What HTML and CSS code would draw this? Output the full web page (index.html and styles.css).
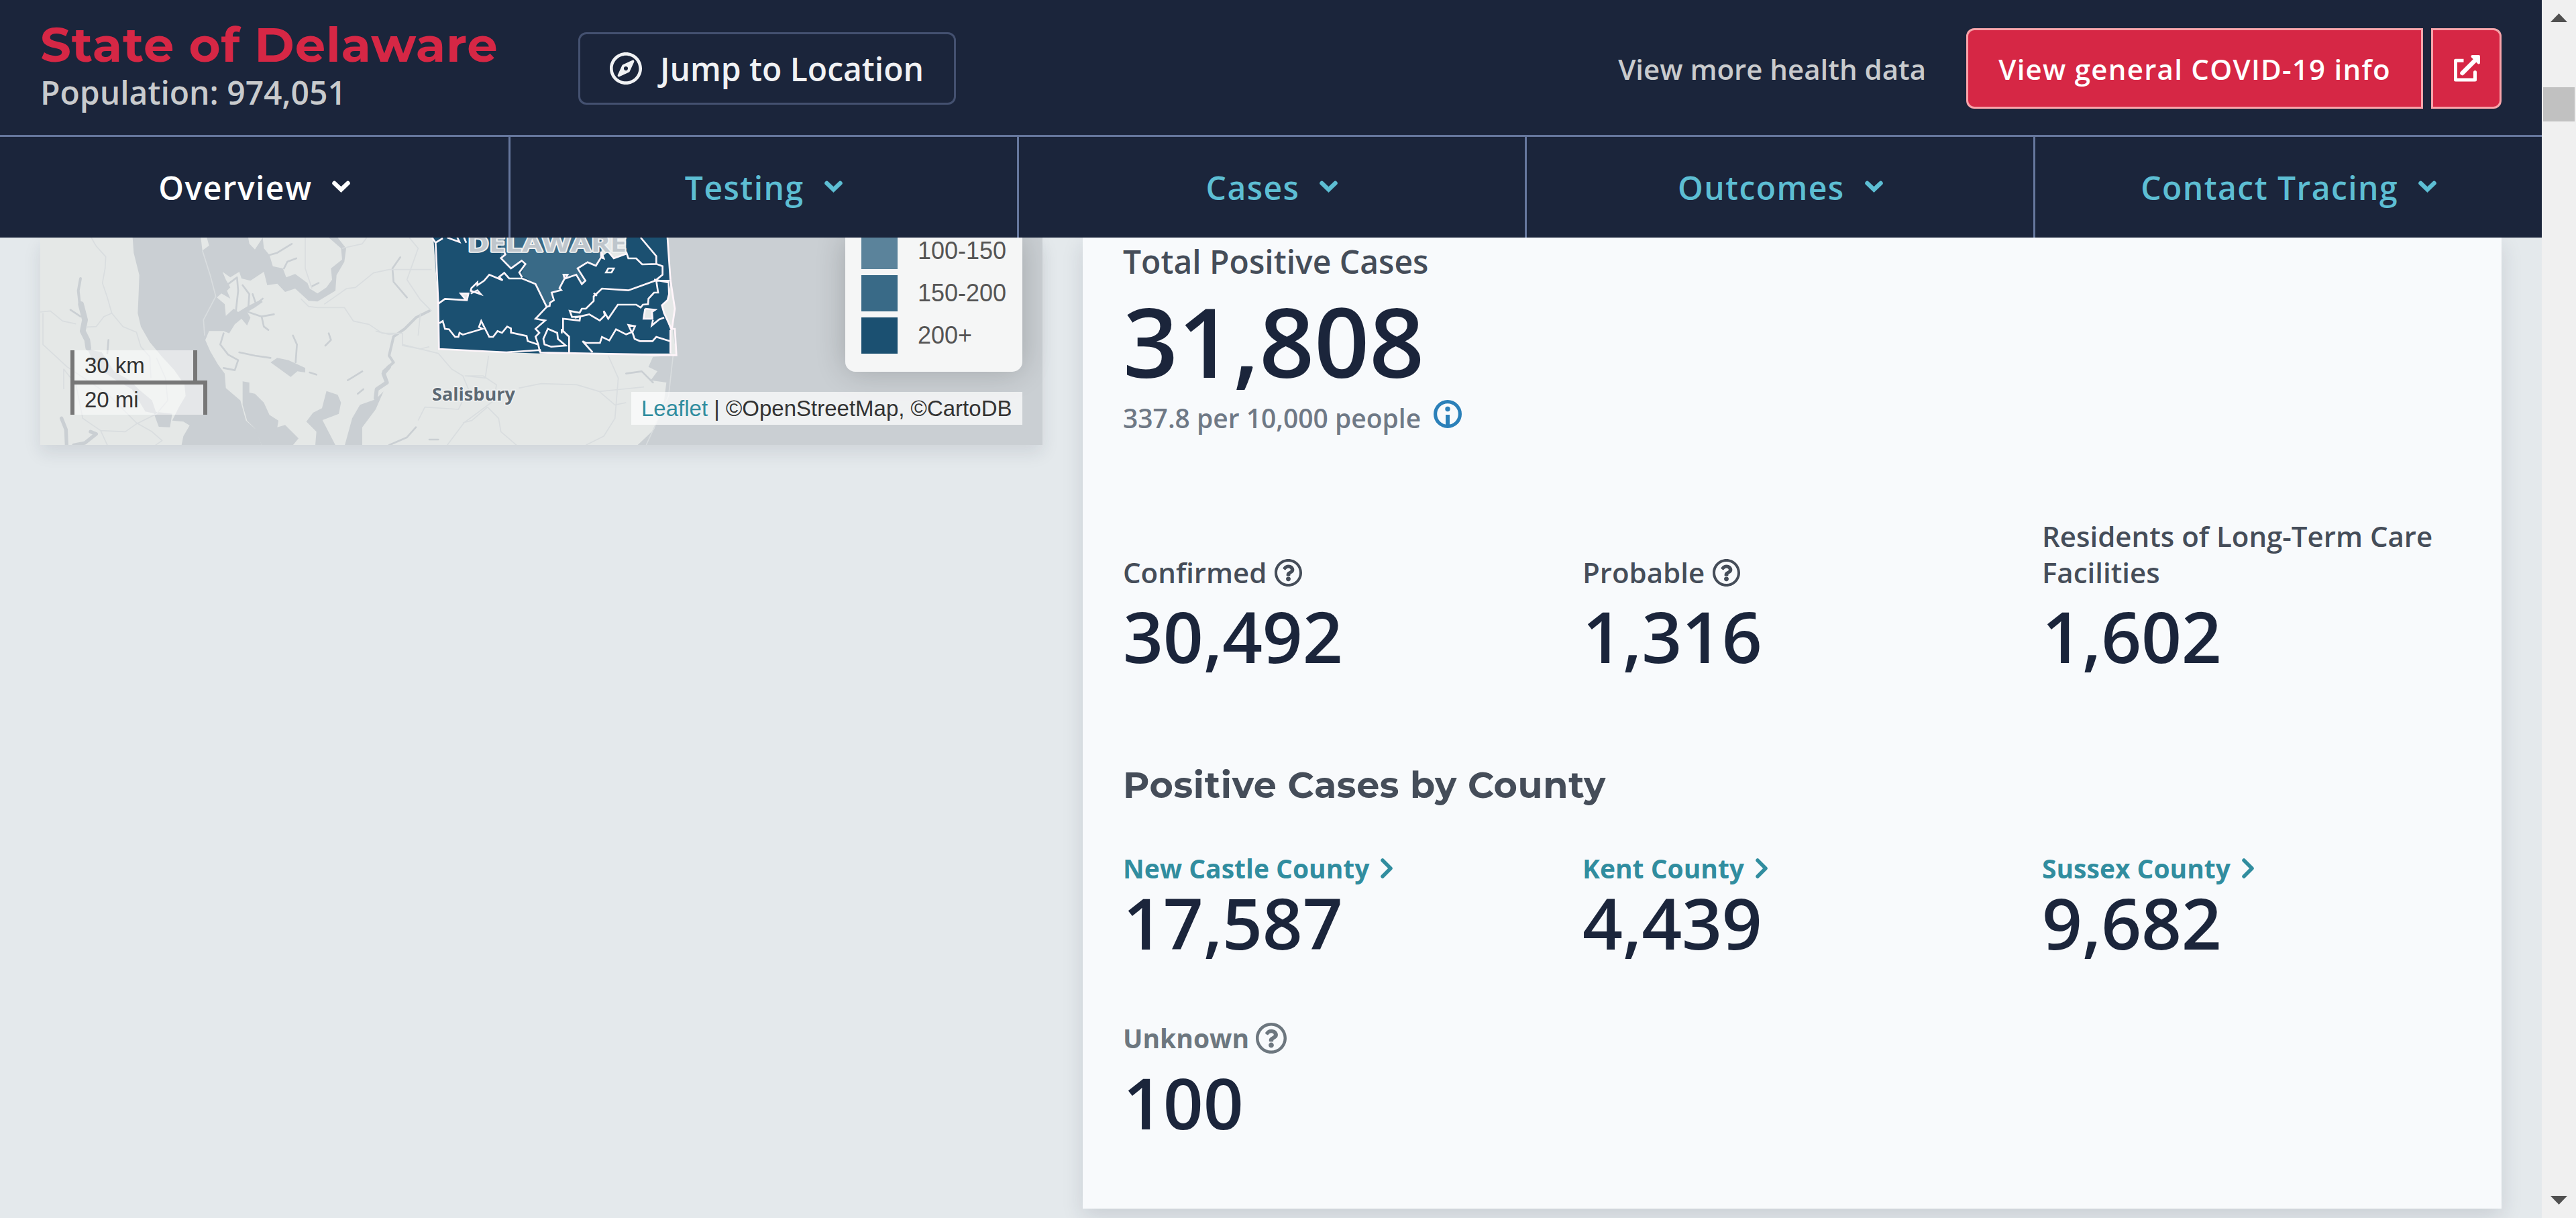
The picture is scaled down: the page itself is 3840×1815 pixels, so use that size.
FILE: index.html
```html
<!DOCTYPE html>
<html lang="en">
<head>
<meta charset="utf-8">
<title>State of Delaware – COVID-19 Data</title>
<link rel="stylesheet" href="styles.css">
</head>
<body>
<svg class="defs" aria-hidden="true">
  <symbol id="help" viewBox="8 8 496 496"><path d="M256 8C119.043 8 8 119.083 8 256c0 136.997 111.043 248 248 248s248-111.003 248-248C504 119.083 392.957 8 256 8zm0 448c-110.532 0-200-89.431-200-200 0-110.495 89.472-200 200-200 110.491 0 200 89.471 200 200 0 110.53-89.431 200-200 200zm107.244-255.2c0 67.052-72.421 68.084-72.421 92.863V300c0 6.627-5.373 12-12 12h-45.647c-6.627 0-12-5.373-12-12v-8.659c0-35.745 27.1-50.034 47.579-61.516 17.561-9.845 28.324-16.541 28.324-29.579 0-17.246-21.999-28.693-39.784-28.693-23.189 0-33.894 10.977-48.942 29.969-4.057 5.12-11.46 6.071-16.666 2.124l-27.824-21.098c-5.107-3.872-6.251-11.066-2.644-16.363C184.846 131.491 214.94 112 261.794 112c49.071 0 101.45 38.304 101.45 88.8zM298 368c0 23.159-18.841 42-42 42s-42-18.841-42-42 18.841-42 42-42 42 18.841 42 42z"/></symbol>
  <symbol id="down" viewBox="0 0 27 18"><path d="M3.500 4l10 9.500 10-9.500" fill="none" stroke="currentColor" stroke-width="6.500" stroke-linecap="round"/></symbol>
  <symbol id="right" viewBox="0 0 21 32"><path d="M4 4l12 12-12 12" fill="none" stroke="currentColor" stroke-width="5.500" stroke-linecap="round" stroke-linejoin="round"/></symbol>
</svg>
<div class="page">
  <header class="header">
    <div class="topbar">
      <div class="place">
        <h1 class="place-name">State of Delaware</h1>
        <p class="population">Population: 974,051</p>
      </div>
      <button class="jump">
        <svg class="compass" viewBox="0 8 496 496"><path fill="currentColor" d="M347.94 129.86L203.6 195.83a31.938 31.938 0 0 0-15.77 15.77l-65.97 144.34c-7.61 16.65 9.54 33.81 26.2 26.2l144.34-65.97a31.938 31.938 0 0 0 15.77-15.77l65.97-144.34c7.61-16.66-9.54-33.81-26.2-26.2zm-77.36 148.72c-12.47 12.47-32.69 12.47-45.16 0-12.47-12.47-12.47-32.69 0-45.16 12.47-12.47 32.69-12.47 45.16 0 12.47 12.47 12.47 32.69 0 45.16zM248 8C111.03 8 0 119.03 0 256s111.03 248 248 248 248-111.03 248-248S384.97 8 248 8zm0 448c-110.28 0-200-89.72-200-200S137.72 56 248 56s200 89.72 200 200-89.72 200-200 200z"/></svg>
        <span>Jump to Location</span>
      </button>
      <div class="actions">
        <a class="more">View more health data</a>
        <a class="info-btn">View general COVID-19 info</a>
        <a class="ext-btn"><svg class="ext" viewBox="0 0 40 40"><path d="M15.500 8.200H3.500V37H32.500V27.500" fill="none" stroke="currentColor" stroke-width="5" stroke-linejoin="round"/><path d="M30 25.500a2.500 2.500 0 0 1 5 0V30H30Z" fill="currentColor"/><path d="M13.500 27L32 8.500" fill="none" stroke="currentColor" stroke-width="6.500" stroke-linecap="round"/><path d="M28.500 2H38V11.500Z" fill="currentColor" stroke="currentColor" stroke-width="4" stroke-linejoin="round"/></svg></a>
      </div>
    </div>
    <nav class="tabs">
      <a class="tab active">Overview<svg class="down"><use href="#down"/></svg></a>
      <a class="tab">Testing<svg class="down"><use href="#down"/></svg></a>
      <a class="tab">Cases<svg class="down"><use href="#down"/></svg></a>
      <a class="tab">Outcomes<svg class="down"><use href="#down"/></svg></a>
      <a class="tab">Contact Tracing<svg class="down"><use href="#down"/></svg></a>
    </nav>
  </header>
  <main class="content">
    <section class="map">
      <svg class="tiles" viewBox="0 12 4482 927">
        <rect y="12" width="4482" height="927" fill="#e5e8e7"/>
        <g fill="#cacfd3">
          <!-- Chesapeake Bay and inlets -->
          <path d="M413 12L418 80 443 180 440 260 436 350 450 410 490 480 545 545 600 605 645 670 650 720 620 770 590 830 640 835 668 852 640 900 632 940H990L965 870 920 830 895 740 830 685 825 620 795 580 760 520 738 470 755 430 820 430 845 440 870 400 900 375 925 405 940 370 925 345 960 325 995 300 985 290 925 320 885 345 865 330 830 362 825 310 790 280 810 262 850 285 835 250 850 235 830 200 815 165 850 190 890 165 900 195 940 205 1000 165 1015 225 1060 218 1095 255 1140 240 1200 295 1240 298 1320 250 1325 180 1360 120 1368 60 1330 12H1290L1345 60 1350 110 1300 150 1305 200 1280 235 1240 262 1205 240 1195 215 1140 175 1100 190 1085 150 1040 140 1025 90 1000 60 995 12 960 65 935 40 930 12H745L755 48 725 70 718 12Z"/>
          <path d="M505 790L530 858 580 860 590 800Z"/>
          <path d="M210 510L275 525 330 610 400 650 440 690 500 740 520 800 470 790 410 690 340 650 250 590Z"/>
          <path d="M905 655L935 660 935 705 960 710 1000 750 1025 805 1065 830 1060 860 1095 850 1155 910 1130 940H990L960 865 925 830 905 760Z"/>
          <path d="M1030 570L1060 550 1110 560 1185 595 1185 615 1150 610 1120 635Z"/>
          <path d="M1280 698L1330 715 1345 750 1335 800 1262 828 1320 940H1230L1235 880 1190 835 1220 795 1260 775Z"/>
          <path d="M1500 735L1535 700 1500 780 1440 860 1440 940H1362L1395 820 1430 760Z"/>
          <path d="M2805 12H4482V939H2672L2745 870 2790 740 2800 660 2730 650 2760 610 2720 590 2740 545 2825 540Z"/>
        </g>
        <g fill="none" stroke="#cacfd3" stroke-linejoin="round" stroke-linecap="round">
          <path stroke-width="12" d="M180 195L170 250 178 320"/>
          <path stroke-width="26" d="M182 310L200 380 190 430 210 470 215 505"/>
          <path stroke-width="16" d="M95 820L115 870 118 940M150 940L200 930 250 890 225 880"/>
          <path stroke-width="8" d="M135 335L180 365M305 470L300 530M820 440L805 490 840 535 885 560 870 605 820 595M890 525L960 540 1030 550M1130 450L1148 490 1142 570M1290 440L1300 470 1275 495M840 220L880 190 885 250 875 340M905 225L935 265 930 330M950 265L965 310 995 285M930 345L990 365 1045 355M990 365L1000 410 1020 425M1025 90L1060 80 1125 40M1090 150L1105 120 1145 105M1215 230L1245 215M1375 650L1400 635 1440 610M1205 615L1235 625M1420 710L1445 690"/>
          <path stroke-width="18" d="M1560 590L1535 620 1550 660 1505 690 1500 730"/>
          <path stroke-width="12" d="M1580 455L1560 540 1580 570 1535 610 1550 660M1580 455L1630 420 1680 370 1740 340"/>
          <path stroke-width="8" d="M1610 100L1575 150 1580 210 1640 280M1680 860L1640 905 1560 940M1740 915L1780 915M2620 620L2690 610 2740 660"/>
        </g>
        <g fill="none" stroke="#d9dddf" stroke-width="5" stroke-linejoin="round">
          <path d="M228 12L250 50 293 98 290 150 278 215 300 280 320 350 370 410 430 435 450 500 490 545 495 640M0 345L45 340 100 385 160 398M12 350V490L120 590 300 710 430 840 500 880 545 920 515 940M205 412L250 410 285 365 320 350M160 670L190 820 270 875 380 880 430 845 520 800 570 740 560 640 520 550M270 875L300 940M105 690L105 600 160 670"/>
          <path d="M725 70L760 180 785 275 730 380 735 450M1185 12V150L1215 240M1165 285L1200 320 1240 325 1360 325 1400 385 1470 400 1530 440 1620 440 1620 495 1700 510 1740 500M1270 310L1370 240 1410 235 1490 170 1560 155H1750M1350 60L1440 40 1460 12"/>
          <path d="M1500 430L1560 445 1615 440M1620 490L1780 530 1840 600 1890 630 1915 690 1870 780 1720 770 1690 830M2005 540L1990 640 1900 630H1980L2040 670 2030 740 1895 840 1820 940M2000 770L2050 820 2060 880 2130 940M2140 685L2240 665 2400 670 2500 700 2570 760 2620 750M2540 540L2585 640 2570 820 2520 900 2440 940M2500 700L2600 690 2700 680M1890 840L1930 830 2000 770M1650 12L1690 60 1640 200 1700 290 1750 340M1700 350L1690 450M2830 540L2810 720 2710 939"/>
        </g>
        <g class="zips" transform="translate(1500 0)">
          <path fill="#e5e8e7" d="M252 12H1305L1322 200 1338 330 1328 420 1345 540 735 525 280 510 270 280Z"/>
          <path fill="#1b5071" d="M258 12H1305L1320 210 1305 290 1280 315 1295 360 1318 425V530H735L585 525 283 510 280 305Z"/>
          <path fill="#396a87" d="M560 12H1010V80L985 138 948 122 903 150 935 205 925 220 895 178 845 195 825 245 787 258 790 295 765 322 715 220 650 180 670 130 650 115 605 150 560 104Z"/>
          <path fill="#e5e8e7" d="M1010 12H1120V85L1065 105 1040 75 1010 100ZM380 258H415L405 292ZM1205 330H1240V375H1198Z"/>
        </g>
        <g class="borders" transform="translate(1500 0)">
          <path d="M268 35L280 305 283 510 585 525 735 515 737 526 1345 538 1338 420 1325 420 1338 330 1318 200 1305 12M268 35L252 12M268 35L300 15M320 12L375 32 365 12M395 12L405 35"/>
          <path d="M280 308L310 286 408 292 415 262H380L405 292M425 262L455 248 470 265 425 250 428 238 455 212 455 225 485 205 508 178 568 203 552 188 575 170 597 195H655L715 220 765 322 715 375 758 383 715 420 732 438 715 455 727 490 735 525M575 75L580 88 560 104 605 150 653 115 670 130 642 168 655 190"/>
          <path d="M285 395L300 385 310 420 328 422 355 456H370L375 438 390 446 478 420 462 412 472 385 508 456H525L545 430 565 438 588 410 605 418V437L675 452 680 475 725 490"/>
          <path d="M765 322L778 318 780 303 797 292 787 258 830 247 822 238 845 195 840 178H858L848 195 897 178 922 220 938 205 903 150 948 122 985 138 1008 100V75L1020 105 1005 100M1120 85L1065 105 1040 75M1120 75L1130 105H1165L1192 132 1255 130 1283 140V178L1250 205 1130 248 1012 240 975 275 975 295 940 330H922L912 348 868 340 878 367 915 365 912 383 838 375V430L865 455V525M1185 12L1255 95V130"/>
          <path d="M890 370L955 355 1002 383 1025 360 1020 340 1040 375 1083 312H1165L1185 325 1195 312 1218 310 1220 285 1245 258H1263L1255 205H1315M1245 200L1310 213 1312 265 1305 292 1280 315 1290 350 1325 425M1205 330L1198 375H1238L1235 345 1250 335 1205 330M1290 370L1268 378 1235 405 1240 380M970 525L925 475 940 483H1003L1012 456 1045 472 1075 422 1120 445 1145 435 1130 403 1160 408 1148 435 1158 465 1182 475H1238L1255 456 1315 475M1318 425V530M975 260L990 272M832 420V440"/>
          <path d="M770 420L812 438 815 465 850 495 785 500 755 490 750 465ZM1040 150H1065L1055 168H1030Z"/>
        </g>
        <g class="map-label">
          <text x="1910" y="74" font-size="104" textLength="712" lengthAdjust="spacingAndGlyphs" fill="#bfc6cc">DELAWARE</text>
          <text x="1752" y="742" font-size="82" textLength="372" lengthAdjust="spacingAndGlyphs" fill="#5d6974">Salisbury</text>
        </g>
      </svg>
      <div class="scale"><div class="scale-km">30 km</div><div class="scale-mi">20 mi</div></div>
      <div class="legend">
        <div class="key"><i class="swatch s1"></i>100-150</div>
        <div class="key"><i class="swatch s2"></i>150-200</div>
        <div class="key"><i class="swatch s3"></i>200+</div>
      </div>
      <div class="credit"><a>Leaflet</a> | ©OpenStreetMap, ©CartoDB</div>
    </section>
    <section class="card">
      <p class="total-label">Total Positive Cases</p>
      <p class="total">31,808</p>
      <p class="rate">337.8 per 10,000 people
        <svg class="info" viewBox="0 0 42 42"><circle cx="21" cy="21" r="18.400" fill="none" stroke="currentColor" stroke-width="5.200"/><circle cx="21" cy="13.500" r="3.700" fill="currentColor"/><path d="M18 22h6v16h-6z" fill="currentColor"/></svg>
      </p>
      <div class="stats kinds">
        <div><p class="label">Confirmed <svg class="help"><use href="#help"/></svg></p><p class="num">30,492</p></div>
        <div><p class="label">Probable <svg class="help"><use href="#help"/></svg></p><p class="num">1,316</p></div>
        <div><p class="label">Residents of Long-Term Care Facilities</p><p class="num">1,602</p></div>
      </div>
      <h2 class="heading">Positive Cases by County</h2>
      <div class="stats counties">
        <div><a class="county">New Castle County<svg class="right"><use href="#right"/></svg></a><p class="num">17,587</p></div>
        <div><a class="county">Kent County<svg class="right"><use href="#right"/></svg></a><p class="num">4,439</p></div>
        <div><a class="county">Sussex County<svg class="right"><use href="#right"/></svg></a><p class="num">9,682</p></div>
        <div class="unknown"><p class="county">Unknown<svg class="help"><use href="#help"/></svg></p><p class="num">100</p></div>
      </div>
    </section>
  </main>
</div>
<div class="scrollbar">
  <svg class="arrow" viewBox="0 0 25 13"><path d="M12.500 0L25 13H0Z"/></svg>
  <div class="thumb"></div>
  <svg class="arrow end" viewBox="0 0 25 13"><path d="M0 0H25L12.500 13Z"/></svg>
</div>
</body>
</html>
```
FILE: styles.css
```css
* { box-sizing: border-box; }
body { margin: 0; width: 3840px; height: 1815px; overflow: hidden; display: flex; background: #e4e9ec; font-family: "Open Sans", sans-serif; font-weight: 600; }
p, h1, h2 { margin: 0; }
svg { display: block; flex: none; }
.defs { position: absolute; width: 0; height: 0; }
.page { width: 3789px; height: 1815px; overflow: hidden; }

.header { height: 354px; background: #1b253b; position: relative; z-index: 2; }
.topbar { height: 204px; border-bottom: 3px solid #66779d; display: flex; align-items: flex-start; padding: 0 60px; }
.place { padding-top: 30px; width: 802px; }
.place-name { font: 700 72px/72px Montserrat, sans-serif; letter-spacing: .85px; color: #d62745; }
.population { margin-top: 12px; font-size: 48px; line-height: 48px; color: #c9cbcd; }
.jump { margin-top: 48px; width: 563px; height: 108px; padding: 0 44px; border: 3px solid #445170; border-radius: 12px; background: none; color: #f1f2f4; display: flex; align-items: center; gap: 27px; font: 600 48px/60px "Open Sans", sans-serif; white-space: nowrap; }
.jump span { padding-top: 1px; }
.compass { width: 48px; height: 48px; }
.actions { margin-left: auto; margin-top: 42px; display: flex; height: 120px; font-size: 42px; line-height: 121px; white-space: nowrap; }
.more { margin-right: 60px; color: #c9cbcd; }
.info-btn, .ext-btn { background: #d62745; border: 3px solid #f8a4aa; color: #fff; }
.info-btn { width: 681px; text-align: center; line-height: 115px; border-radius: 12px 0 0 12px; letter-spacing: 1.26px; }
.ext-btn { width: 105px; margin-left: 12px; border-radius: 0 12px 12px 0; display: flex; align-items: center; justify-content: center; }
.ext { width: 40px; height: 40px; }
.tabs { display: grid; grid-template-columns: repeat(5, 1fr); height: 150px; }
.tab { display: flex; align-items: center; justify-content: center; gap: 30px; font-size: 48px; letter-spacing: 1.44px; color: #5dbed3; border-left: 3px solid #66779d; }
.tab:first-child { border-left: 0; padding-left: 1px; }
.tab.active { color: #fff; }
.down { width: 27px; height: 18px; margin-bottom: 2px; }

.content { display: grid; grid-template-columns: 1494px 2115px; gap: 60px; padding: 0 60px; align-items: start; }
.map { position: relative; height: 309px; box-shadow: 0 12px 24px rgba(28, 37, 60, .1); }
.tiles { width: 1494px; height: 309px; }
.borders { stroke: #fff5fa; stroke-width: 8; fill: none; }
.map-label { font-family: "Open Sans", sans-serif; font-weight: 700; stroke: #f0f2f2; stroke-width: 10; paint-order: stroke; stroke-linejoin: round; }
.scale, .legend, .credit { position: absolute; font-family: "Liberation Sans", Arial, sans-serif; font-weight: 400; }
.scale { left: 45px; bottom: 45px; font-size: 33px; color: #333; }
.scale-km, .scale-mi { padding-left: 15px; border: solid #777; background: rgba(255, 255, 255, .5); line-height: 46px; }
.scale-km { width: 189px; height: 45px; border-width: 0 6px; }
.scale-mi { width: 204px; height: 51px; border-width: 6px 6px 0; }
.legend { left: 1200px; top: 0; width: 264px; height: 200px; padding: 0 24px; border-radius: 0 0 15px 15px; background: rgba(255, 255, 255, .8); box-shadow: 0 0 45px rgba(0, 0, 0, .2); font-size: 36px; color: #555; white-space: nowrap; }
.key { display: flex; align-items: center; gap: 30px; height: 54px; margin-bottom: 9px; }
.key:first-child { margin-top: -7px; }
.swatch { width: 54px; height: 54px; flex: none; }
.s1 { background: #5b839b; }
.s2 { background: #396a87; }
.s3 { background: #1b5071; }
.credit { right: 30px; bottom: 30px; width: 583px; height: 49px; line-height: 49px; padding-left: 15px; background: rgba(255, 255, 255, .7); font-size: 33px; color: #333; white-space: nowrap; }
.credit a { color: #318d9f; }

.card { height: 1447px; padding: 1px 60px 0; background: #f8fafc; color: #454d59; box-shadow: 0 12px 30px rgba(28, 37, 60, .13); }
.total-label { font-size: 48px; line-height: 70px; }
.total { margin-top: 10px; font-size: 144px; line-height: 144px; letter-spacing: -.3px; color: #1b253b; }
.rate { margin-top: 17px; display: flex; gap: 19px; font-size: 39px; line-height: 54px; color: #6f7986; }
.info { width: 42px; height: 42px; color: #2b80b9; }
.stats { display: grid; grid-template-columns: repeat(3, 1fr); column-gap: 60px; row-gap: 92px; align-items: end; }
.kinds { margin-top: 122px; }
.label { font-size: 42px; line-height: 54px; }
.label .help { display: inline-block; width: 41px; height: 41px; vertical-align: -5px; margin-left: 1px; }
.help { fill: currentColor; }
.num { margin-top: 15px; font-size: 105px; line-height: 106px; letter-spacing: -.2px; color: #1b253b; }
.heading { margin-top: 139px; font: 700 54px/60px Montserrat, sans-serif; letter-spacing: .62px; }
.counties { margin-top: 67px; }
.county { display: flex; align-items: center; gap: 16px; font-size: 39px; line-height: 54px; font-weight: 700; color: #318d9f; }
.right { width: 21px; height: 32px; }
.counties .num { margin-top: 1px; }
.unknown .county { gap: 10px; color: #6d777f; }
.unknown .help { width: 46px; height: 46px; }
.counties .unknown .num { margin-top: 16px; }

.scrollbar { width: 51px; height: 1815px; background: #f0f0f0; display: flex; flex-direction: column; align-items: center; padding: 20px 0; }
.arrow { width: 25px; height: 13px; fill: #505050; }
.thumb { width: 47px; height: 51px; margin-top: 97px; background: #c1c1c1; }
.arrow.end { margin-top: auto; }
```
